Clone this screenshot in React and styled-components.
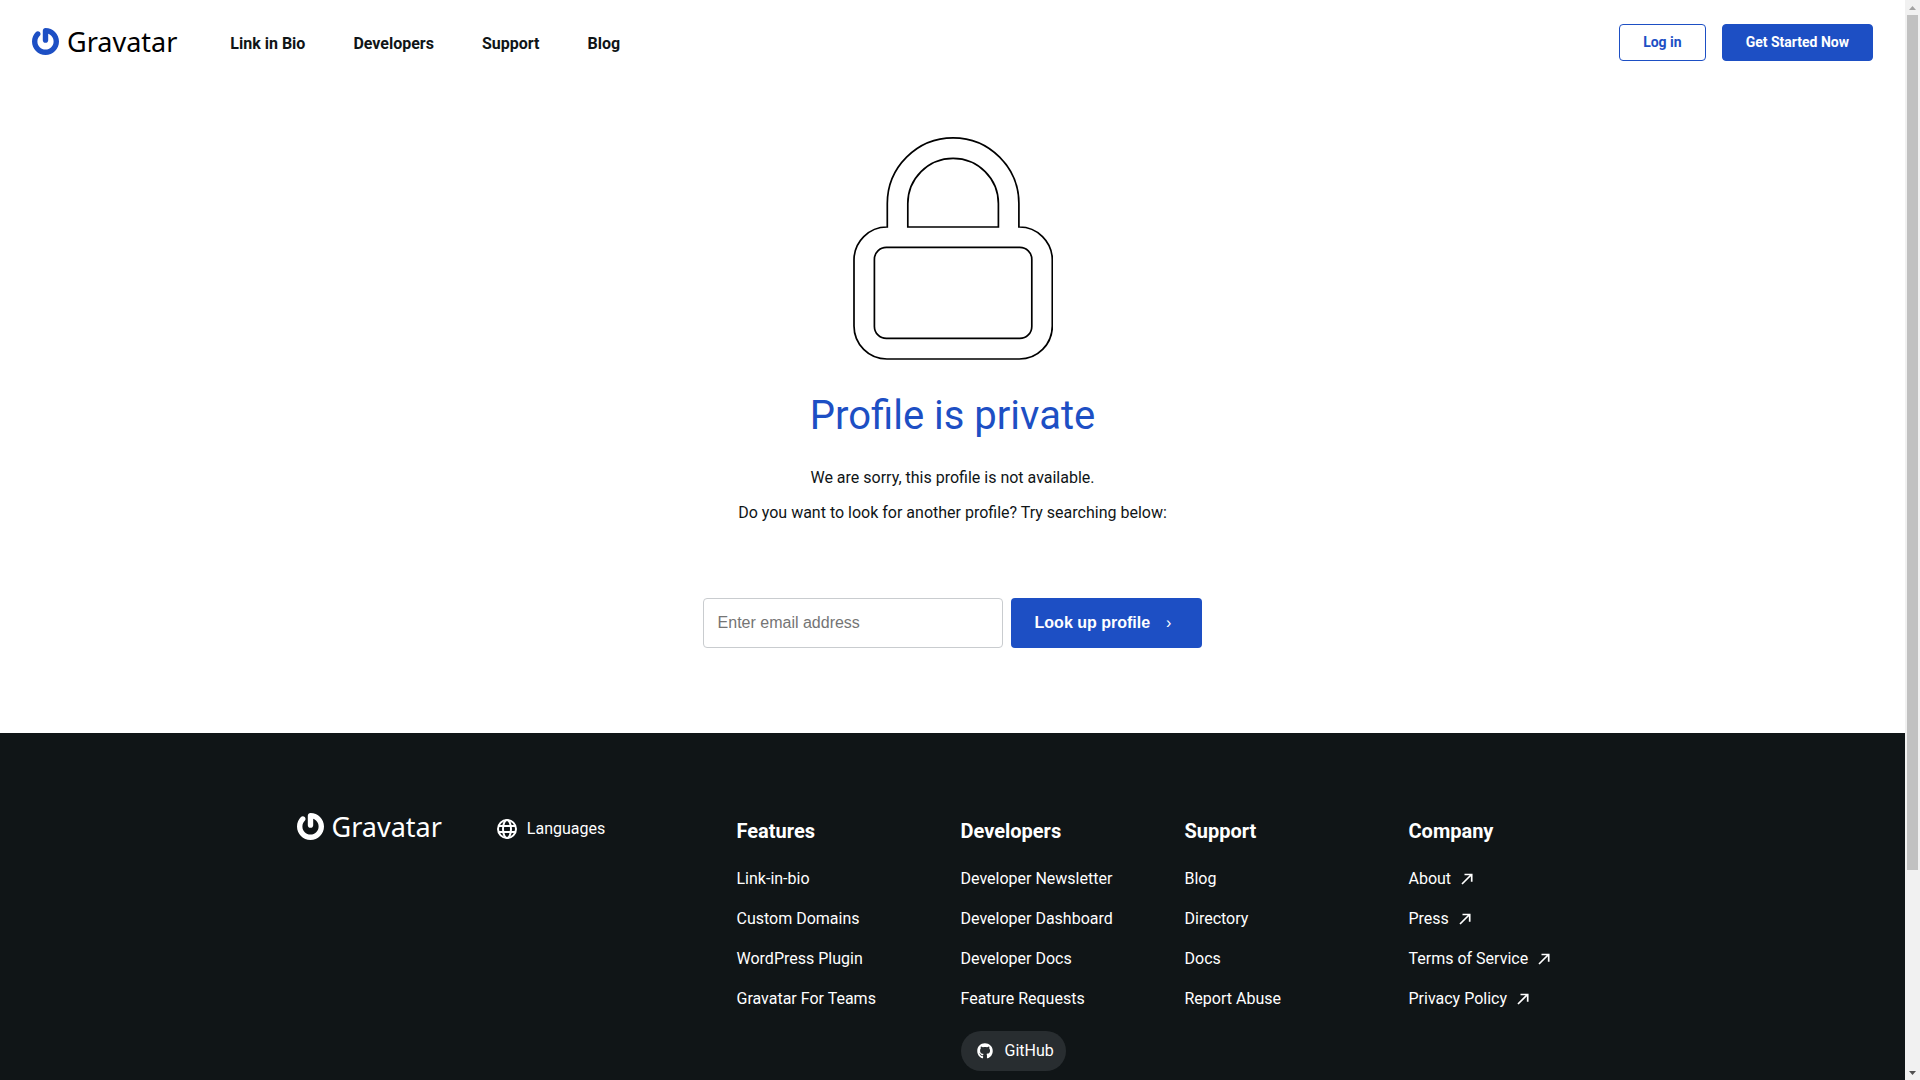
import React, { useState } from 'react'
import styled, { createGlobalStyle } from 'styled-components'
import { FaGithub } from 'react-icons/fa'


const GlobalStyle = createGlobalStyle`
    * {
        box-sizing: border-box;
    }

    body {
        margin: 0;
        background: #fff;
        color: #101517;
        font-family: Roboto, "Liberation Sans", sans-serif;
        font-size: 16px;
        line-height: 24px;
    }
`;

const Window = styled.div`
    display: flex;
    height: 100vh;
    overflow: hidden;
`;

const Page = styled.div`
    flex: 1;
    min-width: 0;
    overflow: hidden;
`;

const ScrollBar = styled.div`
    display: flex;
    flex-direction: column;
    align-items: center;
    width: 15px;
    padding: 6px 2px 5px;
    background: #f1f1f1;
`;

const ScrollArrow = styled.svg`
    flex: none;
    width: 7px;
    height: 4px;
    fill: ${(props) => (props.$down ? "#505050" : "#a3a3a3")};
`;

const ScrollTrack = styled.div`
    flex: 1;
    width: 11px;
    margin: 5px 0 6px;
`;

const ScrollThumb = styled.div`
    width: 100%;
    height: 81.4%;
    background: #c1c1c1;
`;

const Header = styled.header`
    display: flex;
    align-items: center;
    height: 85px;
    padding: 0 32px;
`;

const LogoLink = styled.a`
    display: flex;
    align-items: center;
    gap: 8px;
    padding-bottom: 2px;
    color: ${(props) => (props.$light ? "#fff" : "#000")};
    font-family: "Noto Sans", sans-serif;
    font-size: 27px;
    line-height: 27px;
    text-decoration: none;

    svg {
        width: 27px;
        height: 27px;
        fill: ${(props) => (props.$light ? "#fff" : "#1d4fc4")};
    }
`;

const Nav = styled.nav`
    display: flex;
    gap: 48px;
    margin-left: 53px;
    padding-top: 2px;
`;

const NavLink = styled.a`
    color: #101517;
    font-weight: 700;
    text-decoration: none;
`;

const Actions = styled.div`
    display: flex;
    gap: 16px;
    margin-left: auto;
`;

const ActionLink = styled.a`
    padding: 6px 23px;
    border: 1px solid #1d4fc4;
    border-radius: 4px;
    background: ${(props) => (props.$primary ? "#1d4fc4" : "#fff")};
    color: ${(props) => (props.$primary ? "#fff" : "#1d4fc4")};
    font-size: 14px;
    font-weight: 700;
    line-height: 23px;
    text-decoration: none;
`;

const Main = styled.main`
    display: flex;
    flex-direction: column;
    align-items: center;
    padding: 51px 24px 85px;
    text-align: center;
`;

const Lock = styled.svg`
    width: 200px;
    height: 225px;
    fill: none;
    stroke: #000;
    stroke-width: 1.7;
`;

const Title = styled.h1`
    margin: 31px 0 26px;
    color: #1d4fc4;
    font-size: 40px;
    font-weight: 400;
    line-height: 48px;
`;

const Text = styled.p`
    margin: 0 0 11px;
`;

const Form = styled.form`
    display: flex;
    gap: 8px;
    margin-top: 62px;
`;

const Input = styled.input`
    width: 300px;
    height: 50px;
    padding: 0 14px;
    border: 1px solid #c9cccf;
    border-radius: 4px;
    background: #fff;
    color: #101517;
    font-family: "Liberation Sans", Arial, sans-serif;
    font-size: 16px;

    &::placeholder {
        color: #757575;
    }
`;

const SubmitButton = styled.button`
    display: flex;
    align-items: center;
    gap: 16px;
    height: 50px;
    padding: 0 31px 0 24px;
    border: none;
    border-radius: 4px;
    background: #1d4fc4;
    color: #fff;
    font-family: "Liberation Sans", Arial, sans-serif;
    font-size: 16px;
    font-weight: 700;
`;

const Chevron = styled.span`
    font-weight: 400;
`;

const Footer = styled.footer`
    min-height: 593px;
    padding: 80px 24px;
    background: #101517;
    color: #fff;
`;

const FooterInner = styled.div`
    display: flex;
    max-width: 1312px;
    margin: 0 auto;
`;

const Brand = styled.div`
    display: flex;
    align-items: flex-start;
    flex: 1;
    gap: 55px;
`;

const LanguageButton = styled.button`
    display: flex;
    align-items: center;
    gap: 10px;
    margin-top: 4px;
    padding: 0;
    border: none;
    background: none;
    color: #fff;
    font: inherit;
`;

const GlobeIcon = styled.svg`
    width: 20px;
    height: 20px;
    fill: none;
    stroke: #fff;
    stroke-width: 2;
`;

const Columns = styled.div`
    display: grid;
    grid-template-columns: repeat(4, 200px);
    column-gap: 24px;
    padding-top: 4px;
`;

const ColumnTitle = styled.h2`
    margin: 0 0 22px;
    font-size: 20px;
    font-weight: 700;
    line-height: 28px;
`;

const LinkList = styled.ul`
    display: flex;
    flex-direction: column;
    align-items: flex-start;
    row-gap: 16px;
    margin: 0;
    padding: 0;
    list-style: none;
`;

const FooterLink = styled.a`
    display: flex;
    align-items: center;
    gap: 10px;
    color: #fff;
    text-decoration: none;
`;

const ExternalIcon = styled.svg`
    width: 12px;
    height: 12px;
    fill: none;
    stroke: #fff;
    stroke-width: 1.7;
`;

const GithubLink = styled(FooterLink)`
    gap: 12px;
    margin-top: 4px;
    padding: 8px 12px 8px 16px;
    border-radius: 20px;
    background: #282d30;
`;

const navItems = ["Link in Bio", "Developers", "Support", "Blog"];

const columns = [
    { title: "Features", links: ["Link-in-bio", "Custom Domains", "WordPress Plugin", "Gravatar For Teams"] },
    {
        title: "Developers",
        links: ["Developer Newsletter", "Developer Dashboard", "Developer Docs", "Feature Requests"],
        github: true,
    },
    { title: "Support", links: ["Blog", "Directory", "Docs", "Report Abuse"] },
    { title: "Company", links: ["About", "Press", "Terms of Service", "Privacy Policy"], external: true },
];

function Logo({ light }) {
    return (
        <LogoLink href="#" $light={light}>
            <svg viewBox="0 0 24 24" aria-hidden="true">
                <path d="M12 0c-1.326 0-2.4 1.074-2.4 2.4v8.4c0 1.324 1.074 2.398 2.4 2.398s2.4-1.074 2.4-2.398V5.21c2.795.99 4.799 3.654 4.799 6.789 0 3.975-3.225 7.199-7.199 7.199S4.8 15.975 4.8 12c0-1.989.805-3.789 2.108-5.091.938-.938.938-2.458 0-3.396s-2.458-.938-3.396 0C1.344 5.686 0 8.686 0 12c0 6.627 5.373 12 12 12s12-5.373 12-12S18.627 0 12 0" />
            </svg>
            Gravatar
        </LogoLink>
    )
}

export default function App() {

    const [email, setEmail] = useState("");

    return (
        <>
            <GlobalStyle />
            <Window>
                <Page>
                    <Header>
                        <Logo />
                        <Nav>
                            {navItems.map((item) => (
                                <NavLink key={item} href="#">{item}</NavLink>
                            ))}
                        </Nav>
                        <Actions>
                            <ActionLink href="#">Log in</ActionLink>
                            <ActionLink href="#" $primary>Get Started Now</ActionLink>
                        </Actions>
                    </Header>
                    <Main>
                        <Lock viewBox="0 0 200 225" aria-hidden="true">
                            <path d="M34.3 91V67.6a65.8 65.8 0 0 1 131.6 0V91a33 33 0 0 1 33.4 33v66a33 33 0 0 1-33 33H34a33 33 0 0 1-33-33v-66a33 33 0 0 1 33.3-33z" />
                            <path d="M54.8 91V67.6a45.3 45.3 0 0 1 90.6 0V91z" />
                            <rect x="21.4" y="111.4" width="157.4" height="91" rx="12" />
                        </Lock>
                        <Title>Profile is private</Title>
                        <Text>We are sorry, this profile is not available.</Text>
                        <Text>Do you want to look for another profile? Try searching below:</Text>
                        <Form onSubmit={(e) => e.preventDefault()}>
                            <Input
                                type="email"
                                aria-label="Enter email address"
                                placeholder="Enter email address"
                                value={email}
                                onChange={(e) => setEmail(e.target.value)}
                            />
                            <SubmitButton type="submit">
                                Look up profile
                                <Chevron>›</Chevron>
                            </SubmitButton>
                        </Form>
                    </Main>
                    <Footer>
                        <FooterInner>
                            <Brand>
                                <Logo light />
                                <LanguageButton type="button">
                                    <GlobeIcon viewBox="0 0 20 20" aria-hidden="true">
                                        <circle cx="10" cy="10" r="9" />
                                        <ellipse cx="10" cy="10" rx="4" ry="9" />
                                        <path d="M1.5 7h17M1.5 13h17" />
                                    </GlobeIcon>
                                    Languages
                                </LanguageButton>
                            </Brand>
                            <Columns>
                                {columns.map((column) => (
                                    <section key={column.title}>
                                        <ColumnTitle>{column.title}</ColumnTitle>
                                        <LinkList>
                                            {column.links.map((link) => (
                                                <li key={link}>
                                                    <FooterLink href="#">
                                                        {link}
                                                        {column.external && (
                                                            <ExternalIcon viewBox="0 0 12 12" aria-hidden="true">
                                                                <path d="M1 11L10.5 1.5M3.5 1.5h7.2v7.2" />
                                                            </ExternalIcon>
                                                        )}
                                                    </FooterLink>
                                                </li>
                                            ))}
                                            {column.github && (
                                                <li>
                                                    <GithubLink href="#">
                                                        <FaGithub size={16} />
                                                        GitHub
                                                    </GithubLink>
                                                </li>
                                            )}
                                        </LinkList>
                                    </section>
                                ))}
                            </Columns>
                        </FooterInner>
                    </Footer>
                </Page>
                <ScrollBar aria-hidden="true">
                    <ScrollArrow viewBox="0 0 7 4"><path d="M0 4L3.5 0L7 4z" /></ScrollArrow>
                    <ScrollTrack>
                        <ScrollThumb />
                    </ScrollTrack>
                    <ScrollArrow viewBox="0 0 7 4" $down><path d="M0 0L3.5 4L7 0z" /></ScrollArrow>
                </ScrollBar>
            </Window>
        </>
    )
}
